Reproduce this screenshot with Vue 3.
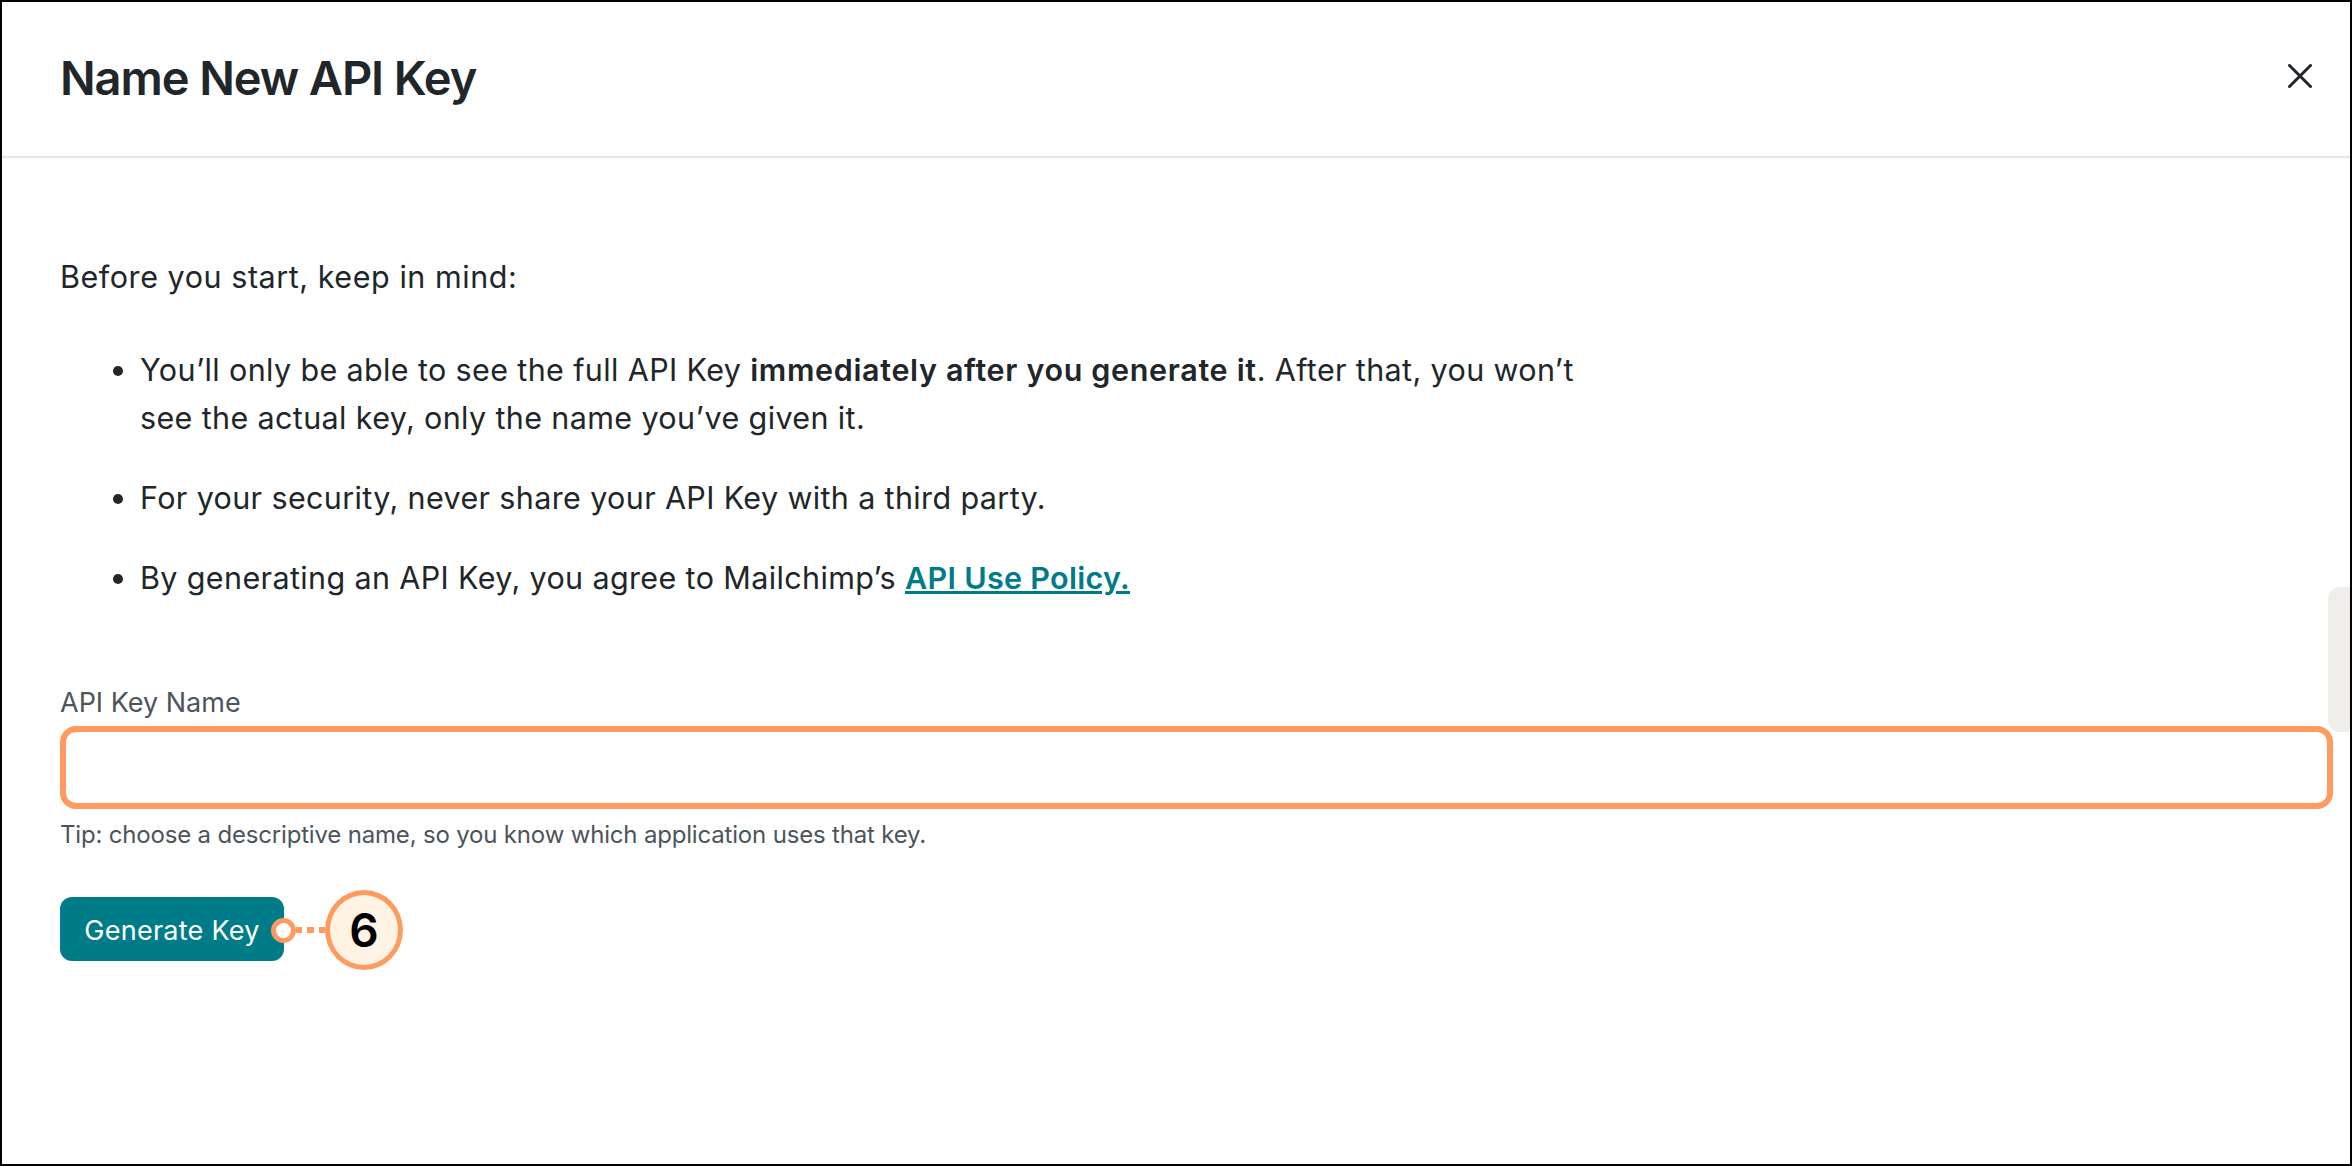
<script setup>
const tip = "Tip: choose a descriptive name, so you know which application uses that key.";
</script>

<template>
  <div class="frame">
    <div class="thumb"></div>

    <header class="head">
      <h1 class="title">Name New API Key</h1>
      <svg class="close" width="24" height="24" viewBox="0 0 24 24">
        <path d="M1.5 1.5 L22.5 22.5 M22.5 1.5 L1.5 22.5" stroke="#21262a" stroke-width="3" stroke-linecap="round" fill="none" />
      </svg>
    </header>

    <main class="body">
      <p class="intro">Before you start, keep in mind:</p>
      <ul class="notes">
        <li>You’ll only be able to see the full API Key <strong>immediately after you generate it</strong>. After that, you won’t<br />see the actual key, only the name you’ve given it.</li>
        <li>For your security, never share your API Key with a third party.</li>
        <li>By generating an API Key, you agree to Mailchimp’s <a class="policy" href="#">API Use Policy.</a></li>
      </ul>

      <label class="label" for="key-name">API Key Name</label>
      <input id="key-name" class="field" type="text" />
      <p class="tip">{{ tip }}</p>

      <div class="actions">
        <button class="generate" type="button">Generate Key</button>
        <!-- callout on top of the button -->
        <div class="callout">
          <span class="dot"></span>
          <span class="dashes">
            <span class="dash"></span>
            <span class="dash"></span>
            <span class="dash"></span>
          </span>
          <span class="step">6</span>
        </div>
      </div>
    </main>
  </div>
</template>

<style>
html, body {
  margin: 0;
  background: #fff;
}
</style>

<style scoped>
.frame {
  position: relative;
  box-sizing: border-box;
  width: 2352px;
  height: 1166px;
  border: 2px solid #000;
  background: #fff;
  overflow: hidden;
  font-family: Inter, Roboto, "Liberation Sans", sans-serif;
  color: #241c15;
}

.head {
  box-sizing: border-box;
  height: 156px;
  padding: 0 38px 0 58px;
  display: flex;
  align-items: center;
  justify-content: space-between;
  border-bottom: 2px solid #e3e7ea;
}

.title {
  margin: 0 0 3px;
  font-size: 47px;
  line-height: 60px;
  font-weight: 600;
  letter-spacing: -1.1px;
  color: #21262a;
}

.close {
  margin-bottom: 6px;
}

.body {
  padding: 95px 17px 0 58px;
}

.intro {
  margin: 0;
  font-size: 30.5px;
  line-height: 48px;
  letter-spacing: 0.55px;
  color: #21262a;
}

.notes {
  margin: 45px 0 0;
  padding: 0 0 0 80px;
  font-size: 30.5px;
  line-height: 48px;
  letter-spacing: 0.37px;
  color: #21262a;
}

.notes li {
  margin-bottom: 32px;
}

.notes strong {
  font-weight: 600;
  letter-spacing: 0.66px;
}

.policy {
  color: #007c89;
  font-weight: 600;
  letter-spacing: 0.3px;
  text-decoration: underline;
}

.label {
  display: block;
  margin-top: 83px;
  font-size: 27px;
  line-height: 36px;
  color: #4c555c;
}

.field {
  position: relative;
  z-index: 1;
  display: block;
  box-sizing: border-box;
  width: 100%;
  height: 83px;
  margin-top: 5px;
  border: 6px solid #ff9b5e;
  border-radius: 16px;
  background: #fff;
  outline: none;
}

.tip {
  margin: 8px 0 0;
  font-size: 24px;
  line-height: 36px;
  letter-spacing: -0.18px;
  color: #4c555c;
}

.actions {
  position: relative;
  margin-top: 44px;
  width: 224px;
}

.generate {
  display: block;
  width: 224px;
  height: 64px;
  padding: 2px 0 0;
  border: none;
  border-radius: 12px;
  background: #007c89;
  color: #fff;
  font-family: inherit;
  font-size: 27px;
  letter-spacing: 0.25px;
}

.callout {
  position: absolute;
  left: 211px;
  top: -7px;
  height: 80px;
  display: flex;
  align-items: center;
}

.dot {
  box-sizing: border-box;
  width: 25px;
  height: 25px;
  border: 5px solid #ff9b5e;
  border-radius: 50%;
  background: #fff;
}

.dashes {
  display: flex;
  gap: 5px;
  width: 29px;
}

.dash {
  width: 7px;
  height: 6px;
  background: #ff9b5e;
}

.step {
  box-sizing: border-box;
  width: 78px;
  height: 80px;
  border: 5px solid #ff9b5e;
  border-radius: 50%;
  background: #fff3e3;
  color: #000;
  font-size: 46px;
  font-weight: 600;
  line-height: 71px;
  text-align: center;
}

.thumb {
  position: absolute;
  right: 0;
  top: 585px;
  width: 22px;
  height: 145px;
  border-radius: 12px 0 0 12px;
  background: #efeeea;
}
</style>
